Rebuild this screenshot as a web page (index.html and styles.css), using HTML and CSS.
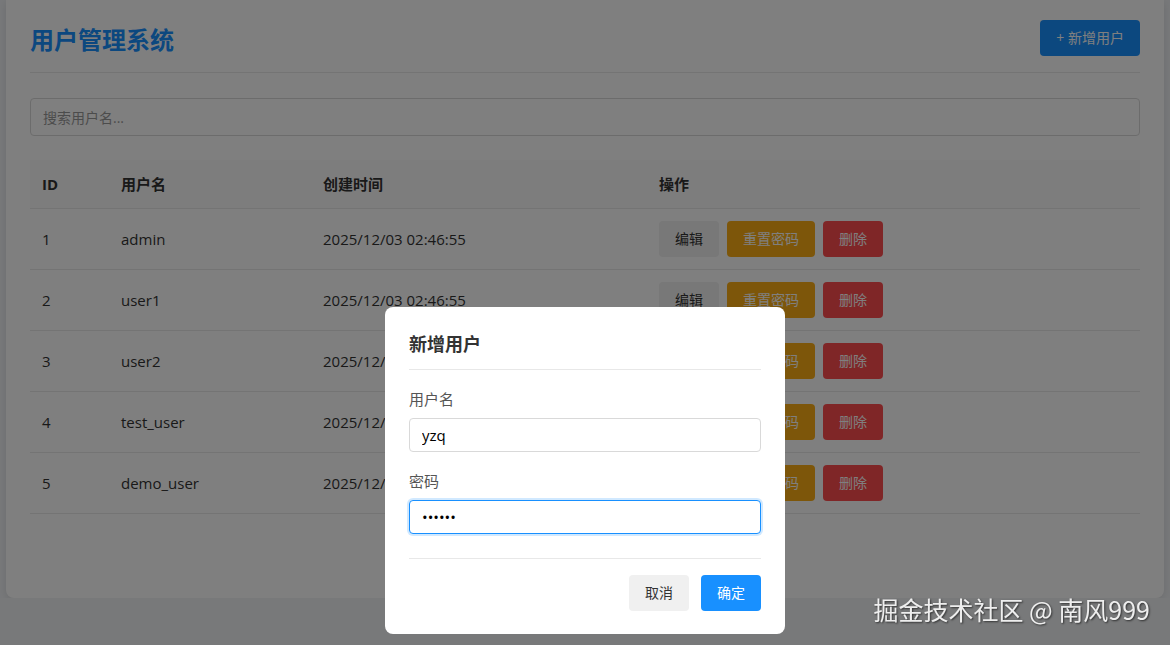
FILE: index.html
```html
<!DOCTYPE html>
<html>
<head>
	<meta charset="utf-8">
	<meta name="viewport" content="width=device-width, initial-scale=1">
	<title>用户管理系统</title>
	<link rel="stylesheet" href="styles.css">
</head>
<body>

<div class="container">
  <div class="header">
    <h1 class="title">用户管理系统</h1>
    <button class="btn btn-primary">+ 新增用户</button>
  </div>

  <input class="search" type="text" placeholder="搜索用户名...">

  <table class="user-table">
    <colgroup>
      <col class="col-id">
      <col class="col-name">
      <col class="col-time">
      <col>
    </colgroup>
    <thead>
      <tr>
        <th>ID</th>
        <th>用户名</th>
        <th>创建时间</th>
        <th>操作</th>
      </tr>
    </thead>
    <tbody>
      <tr>
        <td>1</td>
        <td>admin</td>
        <td>2025/12/03 02:46:55</td>
        <td><div class="actions"><button class="btn btn-edit">编辑</button><button class="btn btn-reset">重置密码</button><button class="btn btn-delete">删除</button></div></td>
      </tr>
      <tr>
        <td>2</td>
        <td>user1</td>
        <td>2025/12/03 02:46:55</td>
        <td><div class="actions"><button class="btn btn-edit">编辑</button><button class="btn btn-reset">重置密码</button><button class="btn btn-delete">删除</button></div></td>
      </tr>
      <tr>
        <td>3</td>
        <td>user2</td>
        <td>2025/12/03 02:46:55</td>
        <td><div class="actions"><button class="btn btn-edit">编辑</button><button class="btn btn-reset">重置密码</button><button class="btn btn-delete">删除</button></div></td>
      </tr>
      <tr>
        <td>4</td>
        <td>test_user</td>
        <td>2025/12/03 02:46:55</td>
        <td><div class="actions"><button class="btn btn-edit">编辑</button><button class="btn btn-reset">重置密码</button><button class="btn btn-delete">删除</button></div></td>
      </tr>
      <tr>
        <td>5</td>
        <td>demo_user</td>
        <td>2025/12/03 02:46:55</td>
        <td><div class="actions"><button class="btn btn-edit">编辑</button><button class="btn btn-reset">重置密码</button><button class="btn btn-delete">删除</button></div></td>
      </tr>
    </tbody>
  </table>
</div>

<!-- add user dialog -->
<div class="mask"></div>
<div class="modal">
  <div class="modal-title">新增用户</div>
  <div class="form-group">
    <label>用户名</label>
    <input class="form-input" type="text" value="yzq">
  </div>
  <div class="form-group">
    <label>密码</label>
    <input class="form-input focused" type="password" value="123456">
  </div>
  <div class="modal-footer">
    <button class="btn btn-cancel">取消</button>
    <button class="btn btn-primary">确定</button>
  </div>
</div>

<div class="watermark">掘金技术社区 @ 南风999</div>

</body>
</html>
```

FILE: styles.css
```css
body {
  margin: 0;
  background-color: #f0f2f5;
  font-family: "Open Sans", "Noto Sans CJK SC", sans-serif;
  color: #333;
}

.container {
  margin: 0 6px;
  padding: 20px 24px 84px;
  background-color: #fff;
  border-radius: 0 0 8px 8px;
  box-shadow: 0 2px 8px rgba(0, 0, 0, 0.1);
}

.header {
  display: flex;
  justify-content: space-between;
  align-items: center;
  padding-bottom: 16px;
  border-bottom: 1px solid #e8e8e8;
}

.title {
  margin: 0;
  padding-top: 3px;
  font-size: 24px;
  line-height: 33px;
  font-weight: bold;
  color: #1890ff;
}

.btn {
  border: none;
  border-radius: 4px;
  padding: 8px 16px;
  font-family: "Open Sans", "Noto Sans CJK SC", sans-serif;
  font-size: 14px;
  line-height: 20px;
  cursor: pointer;
}

.btn-primary {
  background-color: #1890ff;
  color: #fff;
}

.search {
  display: block;
  box-sizing: border-box;
  width: 100%;
  height: 38px;
  margin: 25px 0 24px;
  padding: 0 12px;
  border: 1px solid #d9d9d9;
  border-radius: 4px;
  font-family: "Open Sans", "Noto Sans CJK SC", sans-serif;
  font-size: 14px;
}

.search::placeholder {
  color: #999;
}

.user-table {
  width: 100%;
  border-collapse: collapse;
  table-layout: fixed;
  font-size: 15px;
}

.col-id { width: 79px; }
.col-name { width: 202px; }
.col-time { width: 336px; }

.user-table th {
  background-color: #fafafa;
  text-align: left;
  font-weight: bold;
  padding: 12px;
  line-height: 24px;
  border-bottom: 1px solid #e8e8e8;
}

.user-table td {
  padding: 12px;
  line-height: 36px;
  border-bottom: 1px solid #e8e8e8;
}

.actions {
  display: flex;
  gap: 8px;
}

.btn-edit {
  background-color: #f0f0f0;
  color: #333;
}

.btn-reset {
  background-color: #faad14;
  color: #fff;
}

.btn-delete {
  background-color: #ff4d4f;
  color: #fff;
}

/* dialog */
.mask {
  position: fixed;
  left: 0;
  top: 0;
  right: 0;
  bottom: 0;
  background-color: rgba(0, 0, 0, 0.5);
}

.modal {
  position: fixed;
  top: 307px;
  left: 385px;
  width: 400px;
  box-sizing: border-box;
  padding: 24px 24px 23px;
  background-color: #fff;
  border-radius: 8px;
}

.modal-title {
  font-size: 18px;
  line-height: 26px;
  font-weight: bold;
  padding-bottom: 12px;
  border-bottom: 1px solid #e8e8e8;
}

.form-group {
  margin-top: 18px;
}

.form-group label {
  display: block;
  font-size: 15px;
  line-height: 22px;
  color: #555;
  margin-bottom: 8px;
}

.form-input {
  display: block;
  box-sizing: border-box;
  width: 100%;
  height: 34px;
  padding: 0 12px;
  border: 1px solid #d9d9d9;
  border-radius: 4px;
  font-family: "Open Sans", "Noto Sans CJK SC", sans-serif;
  font-size: 15px;
  color: #000;
}

.form-input.focused {
  border-color: #1890ff;
  box-shadow: 0 0 0 2px rgba(24, 144, 255, 0.2);
  outline: none;
}

.modal-footer {
  display: flex;
  justify-content: flex-end;
  gap: 12px;
  margin-top: 24px;
  padding-top: 16px;
  border-top: 1px solid #e8e8e8;
}

.btn-cancel {
  background-color: #f0f0f0;
  color: #333;
}

.watermark {
  position: fixed;
  right: 20px;
  bottom: 18px;
  font-family: "Noto Sans CJK SC", sans-serif;
  font-size: 25px;
  color: #eee;
  text-shadow: 1px 1px 2px rgba(0, 0, 0, 0.6);
}
```
